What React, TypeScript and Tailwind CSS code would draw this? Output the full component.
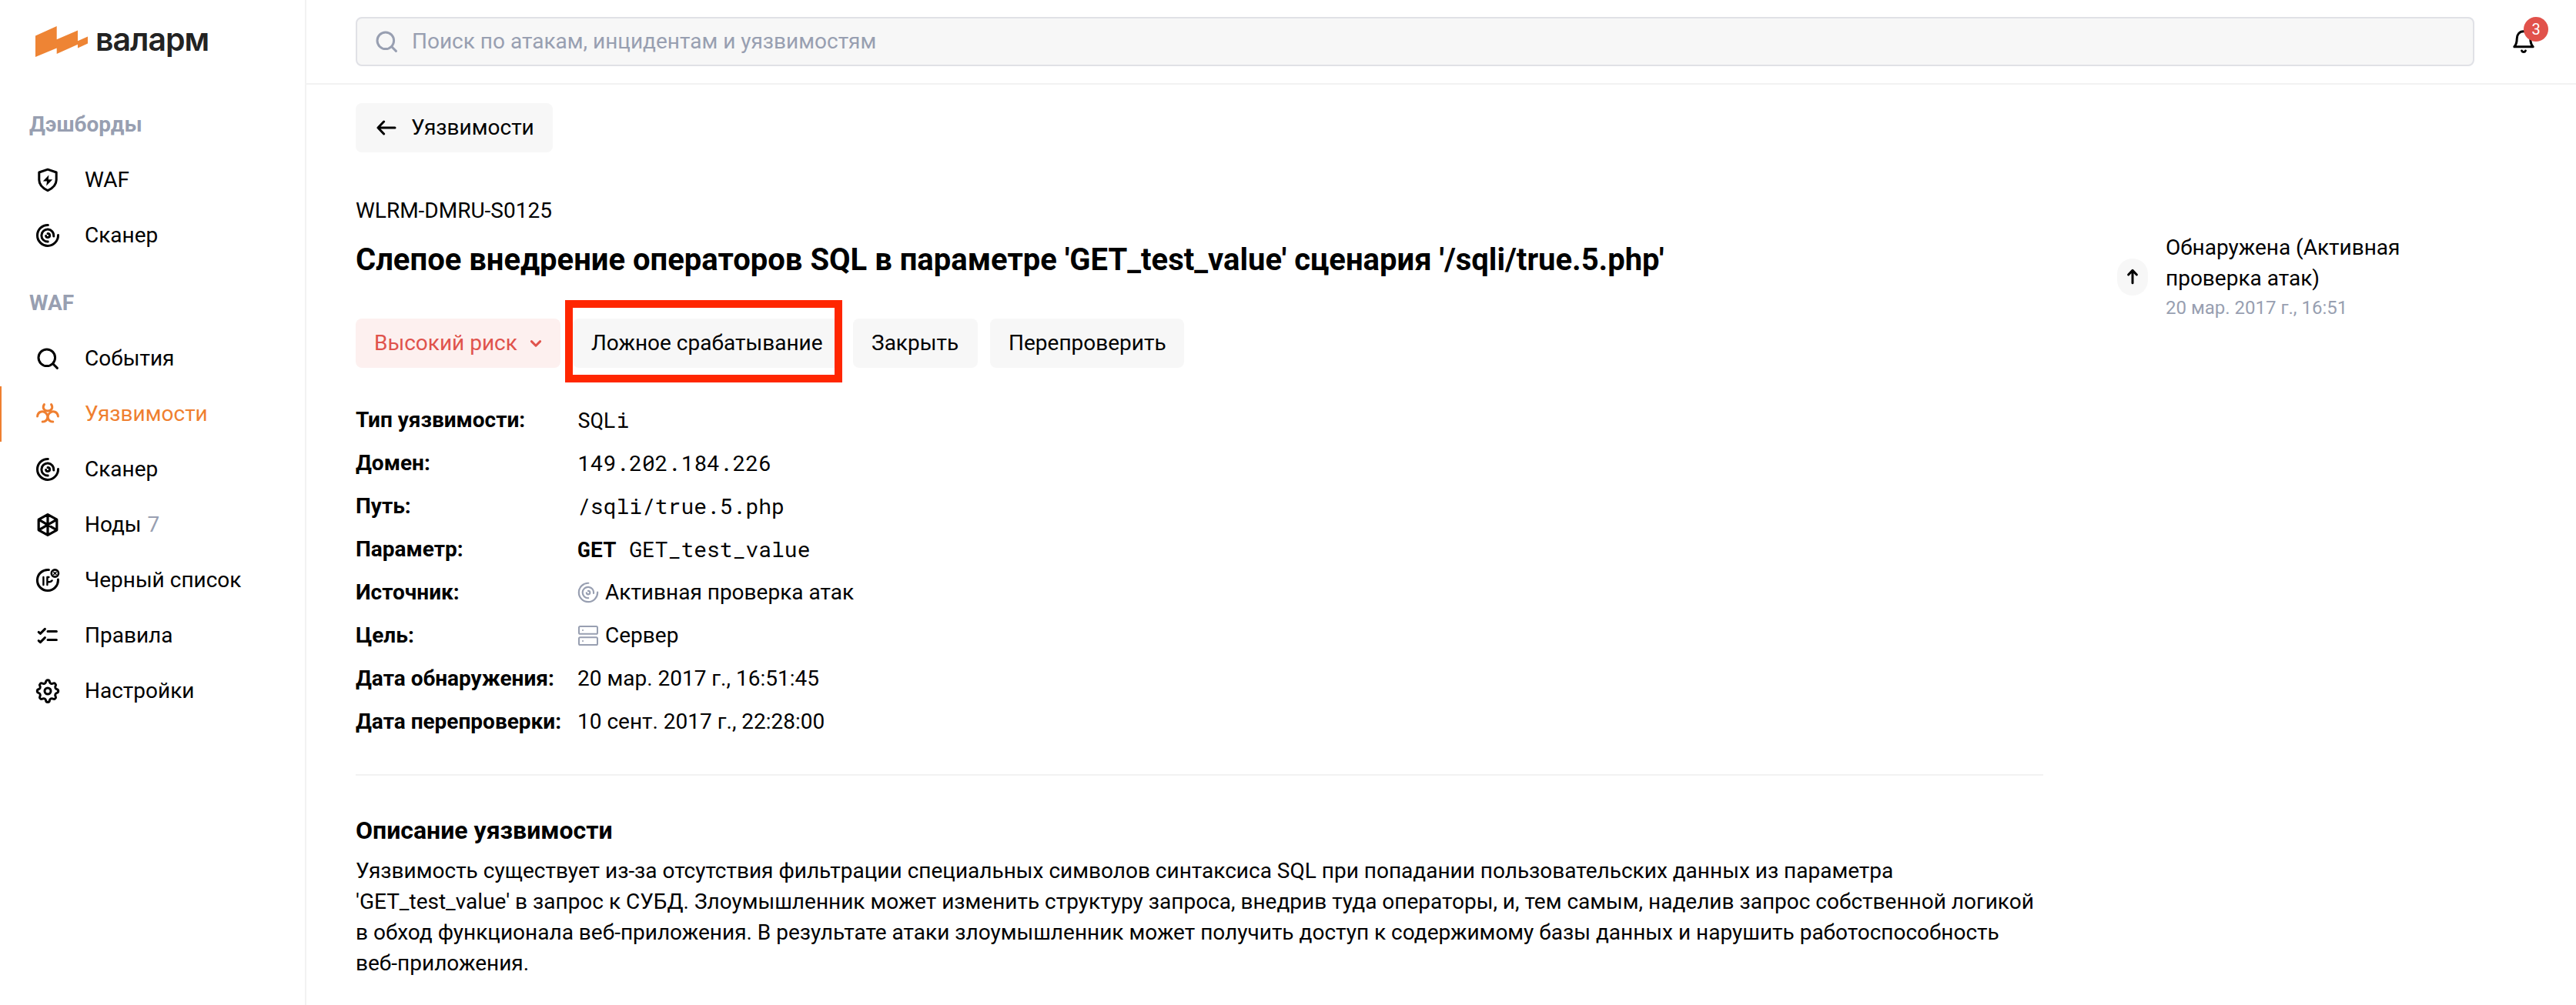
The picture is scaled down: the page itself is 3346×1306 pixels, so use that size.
import React from 'react';

type IconProps = { className?: string };

const base = {
  viewBox: '0 0 20 20',
  fill: 'none',
  stroke: 'currentColor',
  strokeLinecap: 'round' as const,
  strokeLinejoin: 'round' as const,
};

const ShieldIcon = ({ className = '' }: IconProps) => (
  <svg {...base} strokeWidth="1.5" className={className}>
    <path d="M10 3.1 15.6 5v4.9c0 3.1-2.3 5.4-5.6 6.9-3.3-1.5-5.6-3.8-5.6-6.9V5z" />
    <path d="M10.7 6.7 6.9 10.7h2.6l-.4 3 4-4.1h-2.7z" fill="currentColor" stroke="none" />
  </svg>
);

const ScannerIcon = ({ className = '' }: IconProps) => (
  <svg {...base} strokeWidth="1.5" className={className}>
    <path d="M10.2 3.2A6.75 6.75 0 1 0 16.75 9.8" />
    <path d="M13.9 10.5A4 4 0 1 0 10.1 14" />
    <path d="M10 8.8A1.25 1.25 0 1 1 8.8 10.2" />
  </svg>
);

const SearchIcon = ({ className = '' }: IconProps) => (
  <svg {...base} strokeWidth="1.5" className={className}>
    <circle cx="9.4" cy="9.4" r="5.4" />
    <path d="m13.4 13.4 2.8 2.8" />
  </svg>
);

const BiohazardIcon = ({ className = '' }: IconProps) => (
  <svg {...base} strokeWidth="1.5" className={className}>
    <path d="M7.7 3.8C6.4 5.8 7.4 8 10 8s3.6-2.2 2.3-4.2" />
    <path d="M3.3 11.5C3.5 8.7 6.7 7.3 8.9 9.5c1.9 1.9 1 5.5-2.3 5.5" />
    <path d="M16.7 11.5C16.5 8.7 13.3 7.3 11.1 9.5c-1.9 1.9-1 5.5 2.3 5.5" />
  </svg>
);

const NodesIcon = ({ className = '' }: IconProps) => (
  <svg {...base} strokeWidth="1.6" className={className}>
    <path d="m10 3.3 5.9 3.3v6.8L10 16.7l-5.9-3.3V6.6zM10 3.3v13.4M4.1 6.6l11.8 6.8M15.9 6.6 4.1 13.4" />
  </svg>
);

const BlacklistIcon = ({ className = '' }: IconProps) => (
  <svg {...base} strokeWidth="1.5" className={className}>
    <path d="M10.7 3.3A6.75 6.75 0 1 0 16.7 9.5" />
    <path d="M7.2 8v5M9.7 13V8h1M9.7 11.1h1.4c.9 0 1.4-.3 1.7-.9" strokeWidth="1.2" />
    <circle cx="14.7" cy="5.5" r="2.3" strokeWidth="1.3" />
    <path d="m13.8 4.6 1.8 1.8M15.6 4.6l-1.8 1.8" strokeWidth=".7" />
  </svg>
);

const RulesIcon = ({ className = '' }: IconProps) => (
  <svg {...base} strokeWidth="1.5" className={className}>
    <path d="m4.1 7.7 1.1 1 3-3M4.1 13.3l1.1 1 3-3M10 7.3h5.7M10 12.8h5.7" />
  </svg>
);

const GearIcon = ({ className = '' }: IconProps) => (
  <svg {...base} strokeWidth="1.5" className={className}>
    <circle cx="10" cy="10" r="2" />
    <path d="M8.8 4.1a1.2 1.2 0 0 1 2.4 0 1.5 1.5 0 0 0 2.3.9 1.2 1.2 0 0 1 1.6 1.6 1.5 1.5 0 0 0 .9 2.3 1.2 1.2 0 0 1 0 2.3 1.5 1.5 0 0 0-.9 2.3 1.2 1.2 0 0 1-1.6 1.6 1.5 1.5 0 0 0-2.3.9 1.2 1.2 0 0 1-2.4 0 1.5 1.5 0 0 0-2.3-.9 1.2 1.2 0 0 1-1.6-1.6 1.5 1.5 0 0 0-.9-2.3 1.2 1.2 0 0 1 0-2.3 1.5 1.5 0 0 0 .9-2.3 1.2 1.2 0 0 1 1.6-1.6 1.5 1.5 0 0 0 2.3-.9z" />
  </svg>
);

const ServerIcon = ({ className = '' }: IconProps) => (
  <svg {...base} strokeWidth="1" className={className}>
    <rect x="4" y="4" width="12" height="4.9" rx=".8" />
    <rect x="4" y="11.1" width="12" height="4.9" rx=".8" />
    <path d="M6.5 6.5h.01M6.5 13.5h.01" />
  </svg>
);

const BellIcon = ({ className = '' }: IconProps) => (
  <svg {...base} strokeWidth="1.5" className={className}>
    <path d="M3.9 13.4h12.2c-1.3-1.5-1.7-2.7-1.7-5.2 0-2.6-1.5-4.8-4.4-4.8s-4.4 2.2-4.4 4.8c0 2.5-.4 3.7-1.7 5.2z" />
    <path d="M8.8 16a1.3 1.3 0 0 0 2.4 0" />
  </svg>
);

const ArrowLeft = ({ className = '' }: IconProps) => (
  <svg {...base} strokeWidth="1.5" className={className}>
    <path d="M15.5 10h-11M8.3 6 4.5 10l3.8 4" />
  </svg>
);

const ArrowUp = ({ className = '' }: IconProps) => (
  <svg {...base} strokeWidth="1.5" className={className}>
    <path d="M10 13.9V5.7M7.3 8.5 10 5.7l2.7 2.8" />
  </svg>
);

const Chevron = ({ className = '' }: IconProps) => (
  <svg {...base} strokeWidth="1.5" className={className}>
    <path d="m7.2 8.8 2.8 2.8 2.8-2.8" />
  </svg>
);

type Item = { label: string; icon: React.FC<IconProps>; count?: string; active?: boolean };

const groups: { title: string; items: Item[] }[] = [
  {
    title: 'Дэшборды',
    items: [
      { label: 'WAF', icon: ShieldIcon },
      { label: 'Сканер', icon: ScannerIcon },
    ],
  },
  {
    title: 'WAF',
    items: [
      { label: 'События', icon: SearchIcon },
      { label: 'Уязвимости', icon: BiohazardIcon, active: true },
      { label: 'Сканер', icon: ScannerIcon },
      { label: 'Ноды', icon: NodesIcon, count: '7' },
      { label: 'Черный список', icon: BlacklistIcon },
      { label: 'Правила', icon: RulesIcon },
      { label: 'Настройки', icon: GearIcon },
    ],
  },
];

function NavItem({ label, icon: Icon, count, active }: Item) {
  return (
    <a className={`flex h-[72px] items-center border-l-2 pl-10 ${active ? 'border-[#ef7f30] text-[#ef7f30]' : 'border-transparent'}`}>
      <Icon className="mr-7 size-10" />
      <span>{label}</span>
      {count && <span className="ml-2 text-[#989fb1]">{count}</span>}
    </a>
  );
}

function Sidebar() {
  return (
    <aside className="w-[398px] shrink-0 border-r-2 border-[#f2f2f2]">
      <div className="flex h-[110px] items-start pt-[34px] pl-[46px]">
        <svg viewBox="0 0 68 40" className="h-10 w-[68px]" fill="#ee8434">
          <path d="M0 12.5 27.7 0v17.3L55 5.5v13.7l13-5.7v9L55 28.4v-4.6L27.7 36v-7.5L0 40z" />
        </svg>
        <span className="-mt-[9px] ml-[10px] font-[Inter] text-[41px] leading-[52px] font-semibold tracking-[-1px] text-[#222]">валарм</span>
      </div>
      {groups.map((g) => (
        <nav key={g.title} className="pt-8">
          <h3 className="h-14 pl-[38px] leading-10 font-bold text-[#989fb1]">{g.title}</h3>
          {g.items.map((it) => (
            <NavItem key={it.label} {...it} />
          ))}
        </nav>
      ))}
    </aside>
  );
}

const mono = "font-['Roboto_Mono','DejaVu_Sans_Mono',monospace]";

const rows: { label: string; value: React.ReactNode }[] = [
  { label: 'Тип уязвимости:', value: <span className={mono}>SQLi</span> },
  { label: 'Домен:', value: <span className={mono}>149.202.184.226</span> },
  { label: 'Путь:', value: <span className={mono}>/sqli/true.5.php</span> },
  {
    label: 'Параметр:',
    value: (
      <span className={mono}>
        <b className="font-bold">GET</b> GET_test_value
      </span>
    ),
  },
  {
    label: 'Источник:',
    value: (
      <>
        <ScannerIcon className="mr-1 -ml-1 size-9 stroke-[1.2] text-[#989fb1]" />
        Активная проверка атак
      </>
    ),
  },
  {
    label: 'Цель:',
    value: (
      <>
        <ServerIcon className="mr-0.5 -ml-1.5 size-10 text-[#989fb1]" />
        Сервер
      </>
    ),
  },
  { label: 'Дата обнаружения:', value: '20 мар. 2017 г., 16:51:45' },
  { label: 'Дата перепроверки:', value: '10 сент. 2017 г., 22:28:00' },
];

const button = 'flex h-16 items-center rounded-lg pl-6 whitespace-nowrap';

export default function App() {
  return (
    <div className="flex h-[1306px] w-[3346px] overflow-hidden bg-white font-[Roboto,sans-serif] text-[28px] leading-10 text-black">
      <Sidebar />
      <div className="flex flex-1 flex-col">
        <header className="flex h-[110px] items-start border-b-2 border-[#f2f2f2] pt-[22px] pl-16">
          <div className="flex h-16 w-[2752px] items-center rounded-lg border-2 border-[#e0e1e6] bg-[#f7f7f7] pl-[18px] text-[#989fb1]">
            <SearchIcon className="mr-[13px] size-10" />
            <span>Поиск по атакам, инцидентам и уязвимостям</span>
          </div>
          <div className="relative mt-3 ml-11 size-10">
            <BellIcon className="size-10" />
            <span className="absolute -top-3 left-5 flex size-8 items-center justify-center rounded-full bg-[#e1524b] text-[20px] leading-8 text-white">3</span>
          </div>
        </header>
        <div className="flex pt-6 pl-16">
          <main className="w-[2192px]">
            <a className="flex h-16 w-[256px] items-center rounded-lg bg-[#f7f7f7] pl-5">
              <ArrowLeft className="mr-3 size-10" />
              Уязвимости
            </a>
            <div className="mt-14">WLRM-DMRU-S0125</div>
            <h1 className="mt-4 text-[40px] leading-[56px] font-bold">
              Слепое внедрение операторов SQL в параметре 'GET_test_value' сценария '/sqli/true.5.php'
            </h1>
            <div className="mt-12 flex gap-4">
              <div className={`${button} w-[266px] bg-[#fdf0ef] text-[#e0534c]`}>
                Высокий риск
                <Chevron className="ml-1 size-10 shrink-0" />
              </div>
              <div className="relative">
                <div className={`${button} w-[348px] bg-[#f7f7f7]`}>Ложное срабатывание</div>
                <div className="absolute -top-6 -left-[10px] h-[107px] w-[360px] border-[10px] border-[#ff2600]" />
              </div>
              <div className={`${button} w-[162px] bg-[#f7f7f7]`}>Закрыть</div>
              <div className={`${button} w-[252px] bg-[#f7f7f7]`}>Перепроверить</div>
            </div>
            <dl className="mt-10">
              {rows.map((r) => (
                <div key={r.label} className="flex h-14 items-center">
                  <dt className="w-[288px] font-bold">{r.label}</dt>
                  <dd className="flex items-center">{r.value}</dd>
                </div>
              ))}
            </dl>
            <hr className="mt-10 border-t-2 border-[#f2f2f2]" />
            <h2 className="mt-[47px] text-[32px] leading-[48px] font-bold">Описание уязвимости</h2>
            <p className="mt-[9px] whitespace-nowrap">
              Уязвимость существует из-за отсутствия фильтрации специальных символов синтаксиса SQL при попадании пользовательских данных из параметра
              <br />
              'GET_test_value' в запрос к СУБД. Злоумышленник может изменить структуру запроса, внедрив туда операторы, и, тем самым, наделив запрос собственной логикой
              <br />
              в обход функционала веб-приложения. В результате атаки злоумышленник может получить доступ к содержимому базы данных и нарушить работоспособность
              <br />
              веб-приложения.
            </p>
          </main>
          <section className="mt-[168px] ml-24 flex h-[116px] items-center">
            <div className="flex h-12 w-10 items-center justify-center rounded-full bg-[#f7f7f7]">
              <ArrowUp className="size-10 shrink-0" />
            </div>
            <div className="ml-[23px]">
              <div>
                Обнаружена (Активная
                <br />
                проверка атак)
              </div>
              <div className="text-2xl leading-9 text-[#989fb1]">20 мар. 2017 г., 16:51</div>
            </div>
          </section>
        </div>
      </div>
    </div>
  );
}
